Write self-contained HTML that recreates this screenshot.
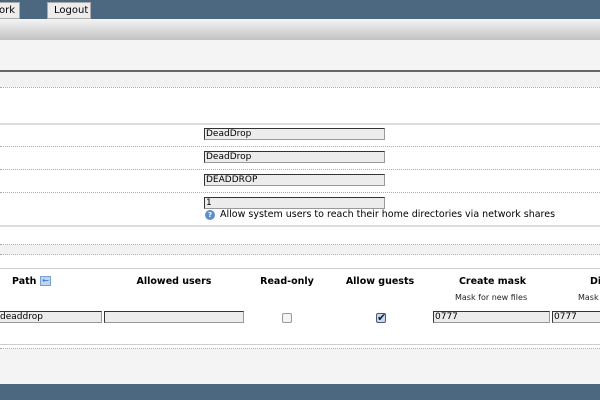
<!DOCTYPE html>
<html><head><style>
*{margin:0;padding:0;box-sizing:border-box}
body{width:600px;height:400px;position:relative;overflow:hidden;background:#fff;font-family:"DejaVu Sans","Liberation Sans",sans-serif;font-size:10px;color:#000}
.a{position:absolute}
.inp{position:absolute;height:12px;background:#ececec;border:1px solid #333;border-right-color:#999;border-bottom-color:#999;font-size:9px;line-height:11px;padding-left:1px}
.dot{position:absolute;left:0;width:600px;border-top:1px dotted #aaa}
.h{position:absolute;top:276px;font-weight:bold;font-size:9.5px;text-align:center}
</style></head><body>
<div class="a" style="left:0;top:0;width:600px;height:19px;background:#4b6880"></div>
<div class="a" style="left:-2px;top:2px;width:22px;height:17px;background:#ececec;border:1px solid #aaa;font-size:10px;padding:2px 0 0 0">ork</div>
<div class="a" style="left:47px;top:2px;width:44px;height:17px;background:#ececec;border:1px solid #aaa;font-size:10px;padding:2px 0 0 6px">Logout</div>
<div class="a" style="left:0;top:19px;width:600px;height:21px;background:linear-gradient(#f4f4f4,#c2c2c2)"></div>
<div class="a" style="left:0;top:40px;width:600px;height:30px;background:#f4f4f4"></div>
<div class="a" style="left:0;top:70px;width:600px;height:2px;background:#666"></div>
<div class="a" style="left:0;top:72px;width:600px;height:15px;background:#f2f2f2"></div>
<div class="dot" style="top:87px"></div>
<div class="a" style="left:0;top:123px;width:600px;height:2px;background:#ddd"></div>
<div class="inp" style="left:204px;top:128px;width:181px">DeadDrop</div>
<div class="dot" style="top:146px"></div>
<div class="inp" style="left:204px;top:151px;width:181px">DeadDrop</div>
<div class="dot" style="top:169px"></div>
<div class="inp" style="left:204px;top:174px;width:181px">DEADDROP</div>
<div class="dot" style="top:192px"></div>
<div class="inp" style="left:204px;top:197px;width:181px">1</div>
<div class="a" style="left:205px;top:210px;width:10px;height:10px;border-radius:50%;background:#5b8fd0;color:#fff;font-size:7px;text-align:center;line-height:10px;font-weight:bold">?</div>
<div class="a" style="left:220px;top:209px;font-size:9.5px">Allow system users to reach their home directories via network shares</div>
<div class="a" style="left:0;top:225px;width:600px;height:2px;background:#ddd"></div>
<div class="dot" style="top:244px"></div>
<div class="a" style="left:0;top:245px;width:600px;height:9px;background:#f2f2f2"></div>
<div class="dot" style="top:254px"></div>
<div class="a" style="left:0;top:268px;width:600px;height:1px;background:#ccc"></div>
<div class="h" style="left:12px;text-align:left">Path</div>
<div class="a" style="left:40px;top:276px;width:11px;height:10px;background:#bcd4ee;border:1px solid #7aa0d0;color:#3070c0;font-size:8px;line-height:8px;text-align:center">←</div>
<div class="h" style="left:124px;width:100px">Allowed users</div>
<div class="h" style="left:252px;width:70px">Read-only</div>
<div class="h" style="left:340px;width:80px">Allow guests</div>
<div class="h" style="left:450px;width:85px">Create mask</div>
<div class="h" style="left:590px;width:20px;text-align:left">Di</div>
<div class="a" style="left:455px;top:293px;font-size:8px;color:#222">Mask for new files</div>
<div class="a" style="left:578px;top:293px;font-size:8px;color:#222">Mask</div>
<div class="inp" style="left:-2px;top:311px;width:104px">deaddrop</div>
<div class="inp" style="left:104px;top:311px;width:140px"></div>
<div class="a" style="left:282px;top:313px;width:10px;height:10px;border:1px solid #999;border-radius:2px;background:#f4f4f4"></div>
<div class="a" style="left:376px;top:313px;width:10px;height:10px;border:1px solid #557;border-radius:2px;background:#c8d8f0;font-size:11px;line-height:8px;color:#123">✔</div>
<div class="inp" style="left:433px;top:311px;width:117px">0777</div>
<div class="inp" style="left:552px;top:311px;width:60px">0777</div>
<div class="a" style="left:0;top:344px;width:600px;height:1px;background:#ccc"></div>
<div class="dot" style="top:348px"></div>
<div class="a" style="left:0;top:349px;width:600px;height:35px;background:#f4f4f4"></div>
<div class="a" style="left:0;top:384px;width:600px;height:16px;background:#4b6880"></div>
</body></html>
